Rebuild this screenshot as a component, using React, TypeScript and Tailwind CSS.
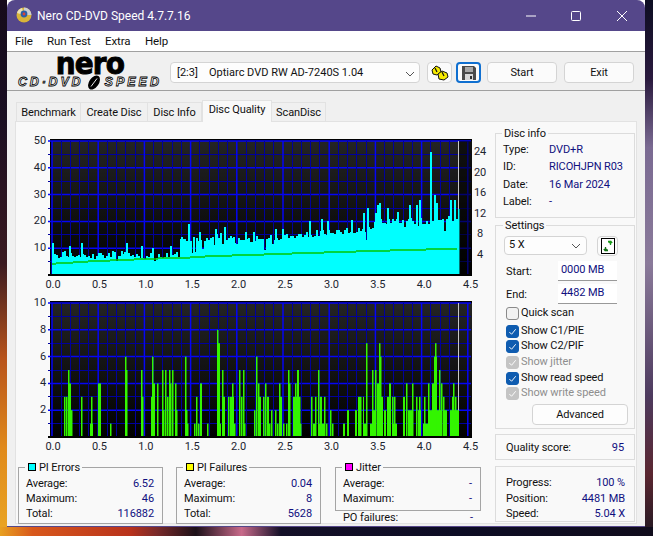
import type { ReactNode } from "react";

const X0 = 52;
const PX_PER_UNIT = 92.4;
const xLabels = ["0.0", "0.5", "1.0", "1.5", "2.0", "2.5", "3.0", "3.5", "4.0", "4.5"];

// Cheap seeded noise so the trace is the same on every render
let seed = 4711;
const rnd = () => {
  seed = (seed * 16807) % 2147483647;
  return seed / 2147483647;
};

const envelope: [number, number][] = [
  [52, 7], [178, 7], [179, 12], [190, 12.5], [218, 14.5], [236, 12.5], [284, 14], [330, 16], [370, 17], [376, 20], [422, 20], [459, 21],
];
const envAt = (x: number) => {
  for (let i = 1; i < envelope.length; i++) {
    const [x1, v1] = envelope[i];
    const [x0, v0] = envelope[i - 1];
    if (x <= x1) return v0 + ((v1 - v0) * (x - x0)) / (x1 - x0);
  }
  return 20;
};

const cyanBars: [number, number][] = [];
for (let x = 52; x < 459; x += 2) {
  const base = envAt(x);
  const r = rnd();
  const v = r < 0.1 ? base - 1.5 - rnd() * 3 : base - 1 + rnd() * 2.5;
  cyanBars.push([x, Math.max(3, v)]);
}

// [x, value] of the spikes that stand out of the trace
const cyanSpikes: [number, number][] = [
  [52, 12], [64, 9], [69, 11], [81, 12], [100, 8], [112, 9], [121, 9], [126, 12], [141, 11], [152, 10], [170, 11],
  [181, 14], [188, 19], [193, 14], [199, 16], [215, 17], [224, 18], [233, 14], [245, 16], [253, 16], [275, 17], [282, 17],
  [309, 20], [321, 21], [327, 20], [351, 20.5], [363, 23], [367, 25], [375, 23], [377, 26], [379, 27], [387, 25],
  [397, 23.5], [409, 26], [416, 26], [419, 28], [430, 46], [434, 30], [436, 27], [450, 28], [454, 28], [458, 24.5],
];

const readSpeed: [number, number, number][] = [
  [52, 56, 263], [56, 73, 262], [73, 88, 261], [88, 110, 260], [110, 134, 259], [134, 158, 258], [158, 190, 257], [190, 205, 256],
  [205, 232, 255], [232, 264, 254], [264, 292, 253], [292, 324, 252], [324, 356, 251], [356, 390, 250], [390, 426, 249], [426, 457, 248],
];

// PI failure bars read off the picture: [from x, to x, height]
const gaps: [number, number, number][] = [
  [64, 65.5, 3], [66, 67.5, 3], [68, 69.5, 5], [69, 71, 4], [71, 72.5, 2], [81, 82.5, 3], [90, 93, 1], [91, 92.5, 3], [98, 101, 4], [110, 111.5, 1],
  [125, 126.5, 6], [126, 127.5, 5], [141, 142.5, 5], [142, 143.5, 3], [151, 152.5, 3], [152, 153.5, 6], [153, 155, 4], [157, 158.5, 4], [162, 163.5, 5],
  [163, 164.5, 2], [165, 166.5, 5], [167, 168.5, 3], [169, 170.5, 5], [170, 171.5, 4], [172, 173.5, 5], [175, 176.5, 4], [176, 177.5, 2],
  [185, 186.5, 6], [186, 187.5, 2], [187, 188.5, 1], [194, 195.5, 1], [196, 197.5, 3], [198, 199.5, 1], [200, 202, 4], [207, 208.5, 1],
  [217, 218.5, 8], [218, 220, 7], [219, 221, 1], [222, 225, 1], [222, 223.5, 5], [223, 225, 3], [228, 229.5, 3], [230, 234, 3], [232, 233.5, 4], [234, 235.5, 1],
  [239, 240.5, 5], [241, 242.5, 3], [243, 244.5, 5], [244, 245.5, 1], [254, 255.5, 2], [256, 257.5, 6], [258, 259.5, 4], [259, 261, 3],
  [263, 264.5, 3], [265, 266.5, 4], [267, 269, 3], [269, 270.5, 1], [271, 272.5, 2], [275, 276.5, 2], [277, 278.5, 1], [279, 280.5, 4], [280, 282, 3], [283, 284.5, 1],
  [286, 287.5, 1], [288, 289.5, 5], [289, 290.5, 4], [293, 297, 3], [295, 296.5, 4], [297, 299, 5], [299, 300.5, 3], [300, 301.5, 1],
  [311, 312.5, 3], [313, 315, 1], [315, 316.5, 3], [318, 319.5, 5], [319, 320.5, 1], [320, 322, 3], [322, 324, 1], [324, 325.5, 3], [326, 327.5, 1],
  [330, 331.5, 2], [332, 333.5, 1], [343, 345, 1], [347, 349, 2], [355, 357, 2], [358, 360, 3], [360, 361.5, 3], [363, 364, 3], [364, 367, 1], [366, 367.5, 7],
  [370, 372, 1], [372, 376, 2], [372, 373.5, 5], [375, 376.5, 5], [377, 379, 4], [379, 380.5, 7], [380, 381.5, 6], [380, 383, 3], [384, 386, 2], [387, 390, 3], [389, 391, 4],
  [392, 393.5, 3], [394, 395.5, 3], [393, 397, 1], [403, 405, 3], [406, 407.5, 4], [408, 412, 2], [412, 413.5, 4], [416, 417.5, 3], [418, 421, 2], [419, 420.5, 3],
  [424, 425.5, 3], [423, 428, 1], [428, 429.5, 4], [429, 432, 2], [432, 435, 4], [434, 437, 6], [435, 436.5, 7], [437, 442, 2], [439, 440.5, 5], [441, 442.5, 4], [443, 444.5, 3],
  [444, 447, 2], [450, 459, 2], [452, 453.5, 3], [453, 454.5, 4], [455, 456.5, 3],
];

function Plot({ top, bottom, children }: { top: number; bottom: number; children: ReactNode }) {
  const ys: number[] = [];
  for (let i = 0; i <= 10; i++) ys.push(top + ((bottom - top) * i) / 10);
  const xs: number[] = [];
  for (let i = 0; i <= 45; i++) xs.push(X0 + (PX_PER_UNIT / 10) * i);
  return (
    <g shapeRendering="crispEdges">
      <rect x={50} y={top - 2} width={422} height={bottom - top + 3} fill="#000" />
      <rect x={52} y={top} width={420} height={bottom - top} fill={`url(#plot${top})`} />
      <defs>
        <linearGradient id={`plot${top}`} x1="0" y1="0" x2="0" y2="1">
          <stop offset="0" stopColor="#242424" />
          <stop offset="1" stopColor="#000" />
        </linearGradient>
      </defs>
      {ys.map((y, i) =>
        i % 2 === 0 ? (
          <line key={y} x1={48} x2={471} y1={y} y2={y} stroke="#0505f5" strokeWidth={1.5} shapeRendering="auto" />
        ) : (
          <line key={y} x1={48} x2={471} y1={y} y2={y} stroke="#00009c" strokeWidth={1} />
        ),
      )}
      {xs.map((x, i) =>
        i % 5 === 0 ? (
          <line key={x} x1={x} x2={x} y1={top} y2={bottom} stroke="#0505f5" strokeWidth={1.5} shapeRendering="auto" />
        ) : (
          <line key={x} x1={x} x2={x} y1={top} y2={bottom} stroke="#00009c" strokeWidth={1} />
        ),
      )}
      <line x1={458} x2={458} y1={top} y2={bottom} stroke="#c8c8c8" strokeWidth={1} />
      {children}
      <line x1={48} x2={472} y1={bottom} y2={bottom} stroke="#000" strokeWidth={1.5} />
    </g>
  );
}

function AxisX({ y }: { y: number }) {
  return (
    <g fontSize={11} fill="#1c2530">
      {xLabels.map((l, i) => (
        <text key={l} x={53 + i * 46.4} y={y} textAnchor="middle">
          {l}
        </text>
      ))}
    </g>
  );
}

function TopChart() {
  return (
    <svg viewBox="16 130 479 162" className="block h-[162px] w-[479px]">
      <Plot top={140} bottom={274}>
        {cyanBars.map(([x, v]) => (
          <rect key={x} x={x} y={274 - v * 2.68} width={2} height={v * 2.68} fill="#00ffff" />
        ))}
        {cyanSpikes.map(([x, v]) => (
          <rect key={x} x={x} y={274 - v * 2.68} width={1.5} height={v * 2.68} fill="#00ffff" />
        ))}
        <rect x={459} y={140} width={13} height={134} fill="#000" opacity={0.55} />
        <g shapeRendering="auto">
          {readSpeed.map(([a, b, y]) => (
            <line key={a} x1={a} x2={b} y1={y} y2={y} stroke="#00c800" strokeWidth={1.5} />
          ))}
        </g>
      </Plot>
      <g fontSize={11} fill="#1c2530" textAnchor="end">
        {[50, 40, 30, 20, 10].map((n, i) => (
          <text key={n} x={46} y={143 + i * 26.8}>
            {n}
          </text>
        ))}
      </g>
      <g fontSize={11} fill="#1c2530">
        {[24, 20, 16, 12, 8, 4].map((n, i) => (
          <text key={n} x={n < 10 ? 477 : 474} y={154 + i * 20.6}>
            {n}
          </text>
        ))}
      </g>
      <AxisX y={287} />
    </svg>
  );
}

function BottomChart() {
  return (
    <svg viewBox="16 292 479 160" className="block h-[160px] w-[479px]">
      <Plot top={302} bottom={436}>
        <g shapeRendering="auto">
          {gaps.map(([a, b, h], i) => (
            <rect key={i} x={a} y={436 - h * 13.4} width={b - a} height={h * 13.4} fill="#33f500" />
          ))}
        </g>
      </Plot>
      <g fontSize={11} fill="#1c2530" textAnchor="end">
        {[10, 8, 6, 4, 2].map((n, i) => (
          <text key={n} x={46} y={305 + i * 26.8}>
            {n}
          </text>
        ))}
      </g>
      <AxisX y={449} />
    </svg>
  );
}

function Legend({ children }: { children: ReactNode }) {
  return <legend className="-ml-[1px] flex h-[14px] items-center gap-[2px] px-[2px] leading-none">{children}</legend>;
}

function Row({ label, value, className = "" }: { label: string; value: string; className?: string }) {
  return (
    <div className={`flex h-[15px] items-center justify-between whitespace-nowrap pt-[2px] ${className}`}>
      <span>{label}</span>
      <span className="text-[#101080]">{value}</span>
    </div>
  );
}

function StatGroup({ title, swatch, rows, className }: { title: string; swatch: string; rows: [string, string][]; className: string }) {
  return (
    <fieldset className={`border border-[#a5a5a5] pr-[8px] pl-[7px] ${className}`}>
      <Legend>
        <span className={`mx-[1px] h-[8px] w-[8px] border border-black ${swatch}`} />
        {title}
      </Legend>
      <div className="mt-[2px]">
        {rows.map(([l, v]) => (
          <Row key={l} label={l} value={v} />
        ))}
      </div>
    </fieldset>
  );
}

function InfoLine({ label, value }: { label: string; value: string }) {
  return (
    <div className="flex h-[17.5px] items-center whitespace-nowrap pt-[2px]">
      <span className="w-[46px]">{label}</span>
      <span className="text-[#101080]">{value}</span>
    </div>
  );
}

function Check({ label, state, className = "" }: { label: string; state: "on" | "off" | "dim"; className?: string }) {
  const box =
    state === "on"
      ? "bg-[#0f5cb0] border-[#0f5cb0]"
      : state === "dim"
        ? "bg-[#c4c4c4] border-[#c4c4c4]"
        : "bg-[#f2f2f2] border-[#8a8a8a]";
  return (
    <div className={`flex h-[16px] items-center gap-[2px] ${state === "dim" ? "text-[#8e8e8e]" : ""} ${className}`}>
      <span className={`flex h-[13px] w-[13px] items-center justify-center rounded-[3px] border ${box}`}>
        {state !== "off" && (
          <svg viewBox="0 0 12 12" className="h-[11px] w-[11px]">
            <path d="M2.5 6.5 5 9l4.5-5.5" fill="none" stroke="#fff" strokeWidth="1" />
          </svg>
        )}
      </span>
      {label}
    </div>
  );
}

const Chevron = () => (
  <svg viewBox="0 0 10 6" className="h-[6px] w-[10px]">
    <path d="M1 1l4 4 4-4" fill="none" stroke="#555" strokeWidth="1" />
  </svg>
);

function Logo() {
  return (
    <div className="mt-[2px] flex h-[36px] w-[144px] flex-col items-center">
      <div className="h-[22px] origin-top scale-x-[0.9] font-['DejaVu_Sans'] text-[31px] leading-[19px] font-bold tracking-[-1px] text-black [-webkit-text-stroke:1px_#000]">
        nero
      </div>
      <div className="flex h-[15px] w-[144px] items-center justify-between font-['Liberation_Sans'] text-[12.5px] leading-none font-bold italic text-white [-webkit-text-stroke:0.8px_#000]">
        <span className="tracking-[2.8px]">CD·DVD</span>
        <svg viewBox="0 0 16 15" className="h-[15px] w-[16px] shrink-0">
          <ellipse cx="8" cy="7.5" rx="4.8" ry="7.8" transform="rotate(35 8 7.5)" fill="#000" />
          <path d="M5 11.5 11 3.5" stroke="#fff" strokeWidth="0.9" />
        </svg>
        <span className="tracking-[3px]">SPEED</span>
      </div>
    </div>
  );
}

export default function App() {
  return (
    <div className="flex h-[536px] w-[653px] flex-col overflow-hidden font-['Roboto',sans-serif] text-[11px] tracking-[-0.1px] text-[#111]">
      <div className="flex h-[527px]">
        <div className="w-[7px] bg-[linear-gradient(to_bottom,#160b1c_0%,#1a0f22_22%,#3a1a20_50%,#b8541c_68%,#e08a1c_85%,#e9a322_100%)]" />
        <div className="flex h-[527px] w-[638px] flex-col overflow-hidden rounded-t-[8px] border-b border-[#55478a] bg-[#f0f0f0]">
          <div className="flex h-[31px] items-center bg-[#55478a] text-white">
            <svg viewBox="0 0 16 16" className="mt-[-1px] ml-[9px] h-[16px] w-[16px]">
              <circle cx="8" cy="8" r="7.5" fill="#d8b43a" />
              <path d="M8 .5A7.5 7.5 0 0 1 15.5 8H8z" fill="#c9cdd6" />
              <path d="M1 6A7.5 7.5 0 0 1 6 1l2 7z" fill="#e9e0b8" />
              <circle cx="8" cy="7" r="3.4" fill="#2b5fa8" />
              <circle cx="8" cy="7" r="1.4" fill="#d8443a" />
            </svg>
            <span className="ml-[5px] text-[12px] tracking-normal">Nero CD-DVD Speed 4.7.7.16</span>
            <div className="ml-auto flex items-center">
              <svg viewBox="0 0 10 10" className="h-[10px] w-[10px]">
                <path d="M0 5h10" stroke="#fff" strokeWidth="1" />
              </svg>
              <svg viewBox="0 0 10 10" className="ml-[35px] h-[10px] w-[10px]">
                <rect x=".5" y=".5" width="9" height="9" rx="1" fill="none" stroke="#fff" />
              </svg>
              <svg viewBox="0 0 10 10" className="mr-[18px] ml-[36px] h-[10px] w-[10px]">
                <path d="M0 0l10 10M10 0 0 10" stroke="#fff" strokeWidth="1" />
              </svg>
            </div>
          </div>

          <div className="flex h-[20px] items-center bg-white pt-[2px] pl-[8px] text-[11.5px] text-[#111]">
            <span className="w-[32px]">File</span>
            <span className="w-[58px]">Run Test</span>
            <span className="w-[40px]">Extra</span>
            <span>Help</span>
          </div>

          <div className="flex h-[40px] items-start border-y border-[#a0a0a0] pl-[11px]">
            <Logo />
            <div className="mt-[10px] ml-[8px] flex h-[21px] w-[250px] items-center rounded-[4px] border border-[#d4d4d4] bg-[#fdfdfd] pt-[2px] pr-[4px] pl-[6px] tracking-normal">
              <span className="w-[32px]">[2:3]</span>
              <span>Optiarc DVD RW AD-7240S 1.04</span>
              <span className="ml-auto">
                <Chevron />
              </span>
            </div>
            <button className="mt-[10px] ml-[7px] flex h-[21px] w-[25px] items-center justify-center rounded-[4px] border border-[#d4d4d4] bg-[#fbfbfb]">
              <svg viewBox="0 0 18 16" className="h-[16px] w-[18px]">
                <path d="M1 5l4-4 4 2 1 4-4 3-4-1z" fill="#f5ea00" stroke="#111" strokeWidth="1" />
                <path d="M7 9l4-3 5 2 1 4-4 3-5-1z" fill="#f5ea00" stroke="#111" strokeWidth="1" />
                <path d="M4 3l2 4M11 7l2 4" stroke="#111" strokeWidth="1.2" />
              </svg>
            </button>
            <button className="mt-[10px] ml-[4px] flex h-[21px] w-[25px] items-center justify-center rounded-[4px] border-2 border-[#0f6fd0] bg-[#fbfbfb]">
              <svg viewBox="0 0 14 14" className="h-[14px] w-[14px]">
                <path d="M0 0h12l2 2v12H0z" fill="#4a4a4a" />
                <rect x="3" y="1" width="8" height="5" fill="#a8a8a8" />
                <rect x="3" y="8" width="8" height="6" fill="#d8d8d8" />
                <rect x="8" y="10" width="2" height="3" fill="#333" />
              </svg>
            </button>
            <button className="mt-[10px] ml-[6px] h-[21px] w-[70px] rounded-[4px] border border-[#d4d4d4] bg-[#fbfbfb] pt-[2px]">Start</button>
            <button className="mt-[10px] ml-[7px] h-[21px] w-[70px] rounded-[4px] border border-[#d4d4d4] bg-[#fbfbfb] pt-[2px]">Exit</button>
          </div>

          <div className="mt-[9px] flex h-[21px] items-end pl-[9px]">
            <div className="flex h-[19px] w-[65px] items-center justify-center border border-b-0 border-[#e2e2e2] pt-[2px]">Benchmark</div>
            <div className="flex h-[19px] w-[67px] items-center justify-center border-t border-r border-[#e2e2e2] pt-[2px]">Create Disc</div>
            <div className="flex h-[19px] w-[54px] items-center justify-center border-t border-r border-[#e2e2e2] pt-[2px]">Disc Info</div>
            <div className="z-10 -mb-[1px] flex h-[22px] w-[70px] items-center justify-center border border-b-0 border-[#e2e2e2] bg-[#f9f9f9] pb-[2px]">Disc Quality</div>
            <div className="flex h-[19px] w-[54px] items-center justify-center border-t border-r border-[#e2e2e2] pt-[2px]">ScanDisc</div>
          </div>

          <div className="ml-[8px] flex h-[403px] w-[622px] border border-[#e2e2e2] bg-[#f9f9f9]">
            <div className="w-[479px]">
              <div className="mt-[9px]">
                <TopChart />
                <BottomChart />
              </div>
              <div className="mt-[7px] flex pl-[2px]">
                <StatGroup
                  title="PI Errors"
                  swatch="bg-[#00ffff]"
                  className="h-[64px] w-[145px]"
                  rows={[["Average:", "6.52"], ["Maximum:", "46"], ["Total:", "116882"]]}
                />
                <StatGroup
                  title="PI Failures"
                  swatch="bg-[#ffff00]"
                  className="ml-[13px] h-[64px] w-[145px]"
                  rows={[["Average:", "0.04"], ["Maximum:", "8"], ["Total:", "5628"]]}
                />
                <div className="ml-[14px] w-[146px]">
                  <StatGroup
                    title="Jitter"
                    swatch="bg-[#ff00ff]"
                    className="h-[51px]"
                    rows={[["Average:", "-"], ["Maximum:", "-"]]}
                  />
                  <Row label="PO failures:" value="-" className="-mt-[1px] pr-[8px] pl-[8px]" />
                </div>
              </div>
            </div>

            <div className="mt-[4px] w-[140px]">
              <fieldset className="h-[92px] border border-[#dcdcdc] pr-[4px] pl-[7px]">
                <Legend>Disc info</Legend>
                <InfoLine label="Type:" value="DVD+R" />
                <InfoLine label="ID:" value="RICOHJPN R03" />
                <InfoLine label="Date:" value="16 Mar 2024" />
                <InfoLine label="Label:" value="-" />
              </fieldset>

              <fieldset className="h-[211px] border border-[#dcdcdc] pr-[6px] pl-[8px]">
                <Legend>Settings</Legend>
                <div className="mt-[4px] flex items-start">
                  <div className="flex h-[19px] w-[83px] items-center justify-between rounded-[4px] border border-[#d4d4d4] bg-[#fdfdfd] pr-[5px] pl-[4px]">
                    5 X
                    <Chevron />
                  </div>
                  <button className="ml-[10px] flex h-[20px] w-[21px] items-center justify-center rounded-[4px] border border-[#d4d4d4] bg-[#fbfbfb]">
                    <svg viewBox="0 0 14 16" className="h-[16px] w-[14px]">
                      <rect x=".5" y=".5" width="13" height="15" fill="#fff" stroke="#000" />
                      <path d="M7 3.5h2.5V7M9.5 3 7.8 5M9.5 3 11.2 5" fill="none" stroke="#1a9a1a" strokeWidth="1.3" />
                      <path d="M7 12.5H4.5V9M4.5 13 2.8 11M4.5 13 6.2 11" fill="none" stroke="#137013" strokeWidth="1.3" />
                    </svg>
                  </button>
                </div>
                <div className="mt-[5px] flex h-[20px] items-center">
                  <span className="w-[54px] pt-[3px] pl-[2px]">Start:</span>
                  <span className="flex h-[20px] w-[59px] items-center border-b border-[#999] bg-white pl-[3px] text-[#101080]">0000 MB</span>
                </div>
                <div className="mt-[3px] flex h-[20px] items-center">
                  <span className="w-[54px] pt-[3px] pl-[2px]">End:</span>
                  <span className="flex h-[20px] w-[59px] items-center border-b border-[#999] bg-white pl-[3px] text-[#101080]">4482 MB</span>
                </div>
                <Check label="Quick scan" state="off" className="mt-[1px] pl-[2px]" />
                <Check label="Show C1/PIE" state="on" className="mt-[2px] pl-[2px]" />
                <Check label="Show C2/PIF" state="on" className="-mt-[1px] pl-[2px]" />
                <Check label="Show jitter" state="dim" className="pl-[2px]" />
                <Check label="Show read speed" state="on" className="pl-[2px]" />
                <Check label="Show write speed" state="dim" className="-mt-[1px] pl-[2px]" />
                <button className="mt-[3px] ml-[28px] block h-[21px] w-[96px] rounded-[4px] border border-[#d4d4d4] bg-[#fdfdfd] pt-[2px]">Advanced</button>
              </fieldset>

              <div className="mt-[5px] flex h-[26px] items-center justify-between border border-[#dcdcdc] pt-[3px] pr-[10px] pl-[10px]">
                <span>Quality score:</span>
                <span className="text-[#101080]">95</span>
              </div>

              <div className="mt-[6px] h-[56px] border border-[#dcdcdc] pt-[7px] pr-[9px] pl-[10px]">
                <Row label="Progress:" value="100 %" className="h-[16px]" />
                <Row label="Position:" value="4481 MB" className="h-[16px]" />
                <Row label="Speed:" value="5.04 X" />
              </div>
            </div>
          </div>
        </div>
        <div className="w-[8px] bg-[linear-gradient(to_bottom,#0d0d22_0%,#2a1a3e_15%,#7a6a92_28%,#8a7a9a_50%,#4d3a5e_75%,#5a2630_90%,#2a1a24_100%)]" />
      </div>
      <div className="h-[9px] bg-[linear-gradient(to_right,#e8a020_0%,#d8581c_5%,#b8321c_20%,#7a2a2a_24%,#1c1018_30%,#c86a8a_37%,#141028_43%,#0c0c24_70%,#100c1c_100%)]" />
    </div>
  );
}
